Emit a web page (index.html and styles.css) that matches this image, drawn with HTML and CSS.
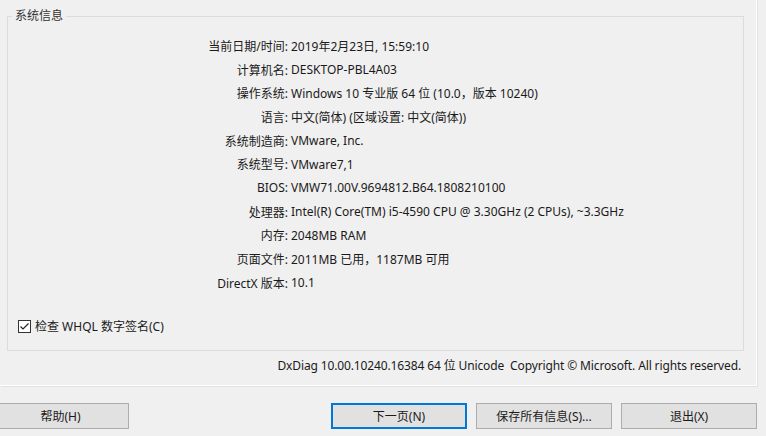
FILE: index.html
```html
<!DOCTYPE html>
<html>
<head>
<meta charset="utf-8">
<title>DirectX 诊断工具</title>
<link rel="stylesheet" href="styles.css">
</head>
<body>
	<div class="tab_page">
		<fieldset class="group">
			<legend>系统信息</legend>
			<div class="info_list">
				<span class="info_key">当前日期/时间:</span><span class="info_val">2019年2月23日, 15:59:10</span>
				<span class="info_key">计算机名:</span><span class="info_val">DESKTOP-PBL4A03</span>
				<span class="info_key">操作系统:</span><span class="info_val">Windows 10 专业版 64 位 (10.0，版本 10240)</span>
				<span class="info_key">语言:</span><span class="info_val">中文(简体) (区域设置: 中文(简体))</span>
				<span class="info_key">系统制造商:</span><span class="info_val">VMware, Inc.</span>
				<span class="info_key">系统型号:</span><span class="info_val">VMware7,1</span>
				<span class="info_key">BIOS:</span><span class="info_val">VMW71.00V.9694812.B64.1808210100</span>
				<span class="info_key">处理器:</span><span class="info_val">Intel(R) Core(TM) i5-4590 CPU @ 3.30GHz (2 CPUs), ~3.3GHz</span>
				<span class="info_key">内存:</span><span class="info_val">2048MB RAM</span>
				<span class="info_key">页面文件:</span><span class="info_val">2011MB 已用，1187MB 可用</span>
				<span class="info_key">DirectX 版本:</span><span class="info_val">10.1</span>
			</div>
			<label class="check_row">
				<svg class="check_box" width="13" height="13" viewBox="0 0 13 13">
					<rect x="0.5" y="0.5" width="12" height="12" fill="#fff" stroke="#333"/>
					<path d="M2.5 6.5 L5 9 L10.5 3.5" fill="none" stroke="#222" stroke-width="1.2"/>
				</svg>
				<span>检查 WHQL 数字签名(C)</span>
			</label>
		</fieldset>
		<div class="version">DxDiag 10.00.10240.16384 64 位 Unicode&nbsp; Copyright © Microsoft. All rights reserved.</div>
	</div>
	<div class="button_bar">
		<button class="btn btn_help">帮助(H)</button>
		<div class="btn_group">
			<button class="btn btn_default">下一页(N)</button>
			<button class="btn">保存所有信息(S)...</button>
			<button class="btn">退出(X)</button>
		</div>
	</div>
</body>
</html>
```

FILE: styles.css
```css
body{
	margin: 0;
	width: 766px;
	height: 436px;
	overflow: hidden;
	background: #f0f0f0;
	font-family: "Noto Sans", "Noto Sans CJK SC", sans-serif;
	font-size: 12px;
	color: #1a1a1a;
}

.tab_page{
	width: 757px;
	height: 386px;
	box-sizing: border-box;
	padding-top: 8px;
	border-right: 1px solid #fff;
	border-bottom: 1px solid #fff;
	box-shadow: 1px 1px 0 #e2e2e2;
}

.group{
	margin: 0 0 0 7px;
	padding: 0;
	width: 737px;
	height: 343px;
	box-sizing: border-box;
	border: 1px solid #dcdcdc;
}
.group legend{ margin-left: 4px; padding: 0 3px; line-height: 16px; color: #333;}

.info_list{
	display: grid;
	grid-template-columns: 280px 1fr;
	column-gap: 3px;
	grid-auto-rows: 23.7px;
	align-items: center;
	margin-top: 10px;
}
.info_key{ text-align: right; white-space: nowrap;}
.info_val{ white-space: nowrap;}

.check_row{ display: flex; align-items: center; gap: 4px; margin: 24px 0 0 10px; line-height: 16px;}
.check_box{ display: block;}

.version{ margin-top: 7px; padding-right: 15px; text-align: right; line-height: 16px; white-space: nowrap; letter-spacing: -0.13px;}

.button_bar{ display: flex; justify-content: space-between; margin-top: 17px;}
.btn_group{ display: flex; gap: 9px; padding-right: 9px;}
.btn{
	width: 136px;
	height: 26px;
	margin: 0;
	padding: 0;
	background: #e1e1e1;
	border: 1px solid #adadad;
	font: inherit;
	color: #1a1a1a;
}
.btn_help{ width: 137px; margin-left: -8px;}
.btn_default{ border-color: #0078d7; box-shadow: inset 0 0 0 1px #0078d7;}
```
